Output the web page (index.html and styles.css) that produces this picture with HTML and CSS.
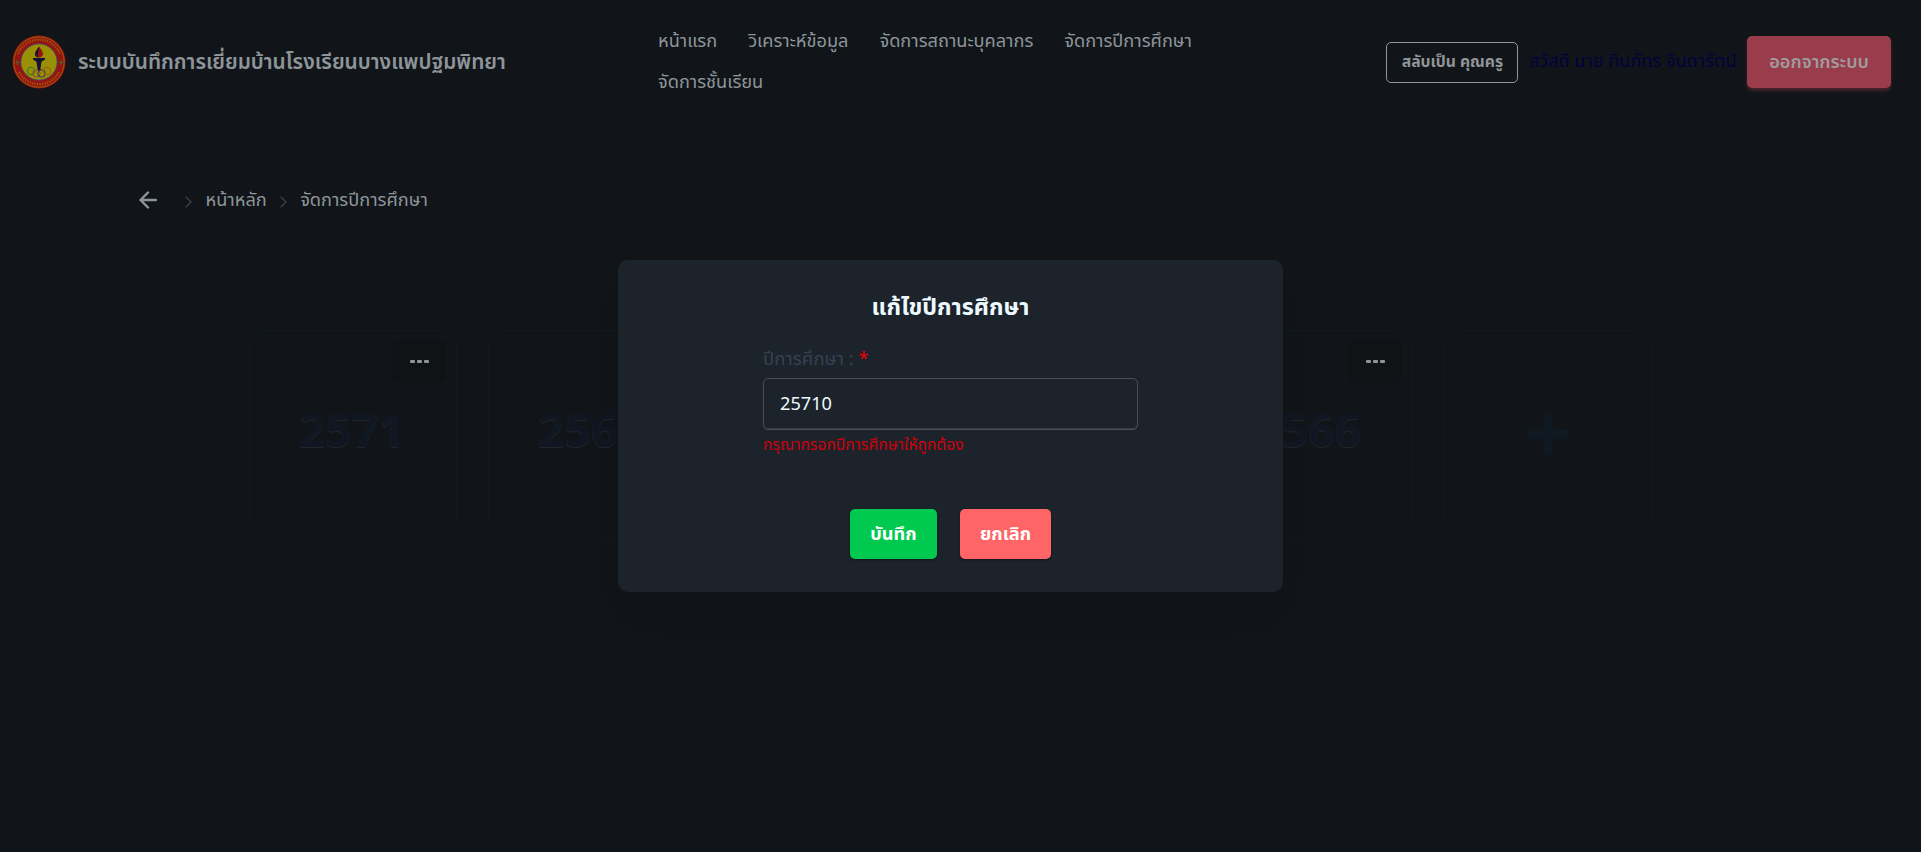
FILE: index.html
```html
<!DOCTYPE html>
<html lang="th">
<head>
<meta charset="utf-8">
<title>จัดการปีการศึกษา</title>
<link rel="stylesheet" href="styles.css">
</head>
<body>
<header class="navbar">
  <div class="brand">
    <svg class="logo" viewBox="0 0 54 54">
      <circle cx="27" cy="27" r="26.5" fill="#98120f"/>
      <circle cx="27" cy="27" r="25.2" fill="none" stroke="#99700b" stroke-width=".8"/>
      <path d="M6 19A22.500 22.500 0 0 1 48 19" fill="none" stroke="#995f0d" stroke-width="2.400" stroke-dasharray="1.200 1.300"/>
      <path d="M7 37A22.500 22.500 0 0 0 47 37" fill="none" stroke="#995f0d" stroke-width="2.400" stroke-dasharray="1.200 1.300"/>
      <circle cx="27" cy="27" r="18.2" fill="#999006" stroke="#454466" stroke-width="1"/>
      <path d="M2.800 27.500h4.400M5 25v5M46.800 27.500h4.400M49 25v5" stroke="#3c702b" stroke-width="1"/>
      <path d="M27 11c1 3 4 4.500 4 8 0 2-2 3.500-4 3.500s-4-1.500-4-3.500c0-3 3-5 4-8z" fill="#98120f"/>
      <path d="M27 12c-2 3-4 5-4 7s1 3 3 3.500c-1-3 1-5 1-10.500z" fill="#15152f"/>
      <path d="M21 23h12v1.500l-3.500 2.300-1.300 9h-2.400l-1.300-9L21 24.500z" fill="#111330"/>
      <g fill="none" stroke-width="1">
        <circle cx="19" cy="36" r="3.700" stroke="#2c7d23"/>
        <circle cx="24.500" cy="38.500" r="3.700" stroke="#8d4545"/>
        <circle cx="29.500" cy="38.500" r="3.700" stroke="#30335c"/>
        <circle cx="35" cy="36" r="3.700" stroke="#a05618"/>
      </g>
    </svg>
    <span class="brand-name">ระบบบันทึกการเยี่ยมบ้านโรงเรียนบางแพปฐมพิทยา</span>
  </div>
  <nav class="menu">
    <a>หน้าแรก</a><a>วิเคราะห์ข้อมูล</a><a>จัดการสถานะบุคลากร</a><a>จัดการปีการศึกษา</a><a>จัดการชั้นเรียน</a>
  </nav>
  <div class="account">
    <button class="switch"><span>สลับเป็น คุณครู</span></button>
    <span class="greeting">สวัสดี นาย ทินภัทร จินดารัตน์</span>
    <button class="logout">ออกจากระบบ</button>
  </div>
</header>
<div class="breadcrumbs">
  <svg class="back" viewBox="0 0 18 18"><path d="M17 9H1.500M9 1.500L1.500 9 9 16.500"/></svg>
  <i class="chev"></i><span>หน้าหลัก</span><i class="chev"></i><span>จัดการปีการศึกษา</span>
</div>
<main class="cards">
  <div class="card"><button class="more"><i></i><i></i><i></i></button><span class="year">2571</span></div>
  <div class="card"><button class="more"><i></i><i></i><i></i></button><span class="year">2569</span></div>
  <div class="card"><button class="more"><i></i><i></i><i></i></button></div>
  <div class="card"><button class="more"><i></i><i></i><i></i></button></div>
  <div class="card"><button class="more"><i></i><i></i><i></i></button><span class="year">2566</span></div>
  <div class="card add"><svg class="plus" viewBox="0 0 42 42"><path d="M21 4.500v33M4.500 21h33"/></svg></div>
</main>
<section class="modal">
  <h3>แก้ไขปีการศึกษา</h3>
  <div class="field">
    <label>ปีการศึกษา : <b>*</b></label>
    <div class="input">25710</div>
    <p class="error">กรุณากรอกปีการศึกษาให้ถูกต้อง</p>
  </div>
  <div class="actions">
    <button class="save">บันทึก</button>
    <button class="cancel">ยกเลิก</button>
  </div>
</section>
</body>
</html>
```
FILE: styles.css
```css
* { box-sizing: border-box; }
body {
  margin: 0;
  height: 852px;
  overflow: hidden;
  background: #111519;
  color: #8e9599;
  font: 18.2px/28px "Noto Sans Thai", "Noto Sans", sans-serif;
}
button {
  padding: 0;
  border: 0;
  font: inherit;
  white-space: nowrap;
}
.navbar { display: flex; align-items: center; height: 124px; padding: 0 30px 0 11.500px; }
.brand { display: flex; align-items: center; gap: 12.500px; width: 632.500px; }
.logo { width: 54px; height: 54px; flex: none; }
.brand-name { padding-top: 2px; font-size: 20.800px; font-weight: 600; white-space: nowrap; }
.menu { display: flex; flex-wrap: wrap; width: 600px; gap: 13px 31px; padding-left: 14px; }
.menu a { white-space: nowrap; }
.account { display: flex; align-items: center; margin-left: auto; gap: 10.500px; }
.switch {
  width: 132px;
  height: 41px;
  border: 1px solid #929699;
  border-radius: 5px;
  background: transparent;
  color: #929699;
  font-size: 15.700px;
  font-weight: 700;
}
.greeting { color: #02023c; font-size: 18.100px; white-space: nowrap; }
.logout {
  width: 144px;
  height: 52px;
  padding-top: 2px;
  border-radius: 5px;
  background: #993c4b;
  color: #a09b9c;
  font-weight: 600;
  box-shadow: 0 3px 4px -1px #993c4b80;
}
.breadcrumbs { display: flex; align-items: center; height: 28px; margin: 62px 0 0 139px; }
.breadcrumbs span { padding-top: 1px; }
.back { width: 18px; height: 18px; margin-right: 25px; fill: none; stroke: #8e9599; stroke-width: 2.400; stroke-linecap: round; stroke-linejoin: round; }
.breadcrumbs span + .chev { margin-left: 10px; }
.chev {
  width: 8px;
  height: 8px;
  margin: 4px 15.500px 0 0;
  border: solid #494d51;
  border-width: 1px 1px 0 0;
  transform: rotate(45deg);
}
.cards { display: flex; gap: 31px; margin: 116px 0 0 249px; }
.card {
  display: flex;
  flex-direction: column;
  width: 208px;
  height: 208px;
  padding: 11px 10px;
  border: 1px solid #111922;
  border-bottom-color: #14181c;
  border-radius: 16px;
}
.more {
  display: flex;
  align-items: center;
  justify-content: center;
  gap: 2px;
  align-self: flex-end;
  width: 53px;
  height: 41px;
  margin-top: -1px;
  border: 1px solid #0e1215;
  border-radius: 5px;
  background: #0f1316;
}
.more i { width: 5px; height: 3px; border-radius: 1px; background: #8e9599; }
.year {
  margin-top: 13px;
  text-align: center;
  color: #101722;
  font: 700 46.500px/68px "Noto Sans", sans-serif;
  text-shadow: 0 1px 1px #25282b;
  padding-right: 2px;
}
.add { align-items: center; justify-content: center; }
.plus { width: 42px; height: 42px; margin-top: -1px; fill: none; stroke: #101822; stroke-width: 9; stroke-linecap: round; }
/* Dialog floats above the page */
.modal {
  position: absolute;
  left: 618px;
  top: 260px;
  width: 665px;
  height: 332px;
  padding: 32px 145px;
  border-radius: 10px;
  background: #1d232a;
  box-shadow: 0 25px 40px -24px #00000040;
}
.modal h3 { margin: 0; color: #ecf9ff; font-size: 23.300px; line-height: 32px; text-align: center; }
.field { margin-top: 21px; }
.field label { display: block; color: #364153; font-size: 18.500px; }
.field label b { color: #e7000b; font-weight: 400; }
.input {
  height: 52px;
  margin-top: 5px;
  padding: 0 16px;
  border: 1px solid #494f56;
  border-radius: 5px;
  color: #ecf9ff;
  line-height: 51px;
  box-shadow: inset 0 -1px #353b42;
}
.error { margin: 4px 0 0; color: #d0000b; font-size: 15.600px; line-height: 22px; }
.actions { display: flex; justify-content: center; gap: 23px; margin-top: 53px; }
.save, .cancel { height: 50px; padding-top: 2px; border-radius: 5px; color: #fff; font-weight: 700; box-shadow: 0 1px 3px #0006; }
.save { width: 87px; background: #00c950; }
.cancel { width: 91px; background: #ff6467; }
```
